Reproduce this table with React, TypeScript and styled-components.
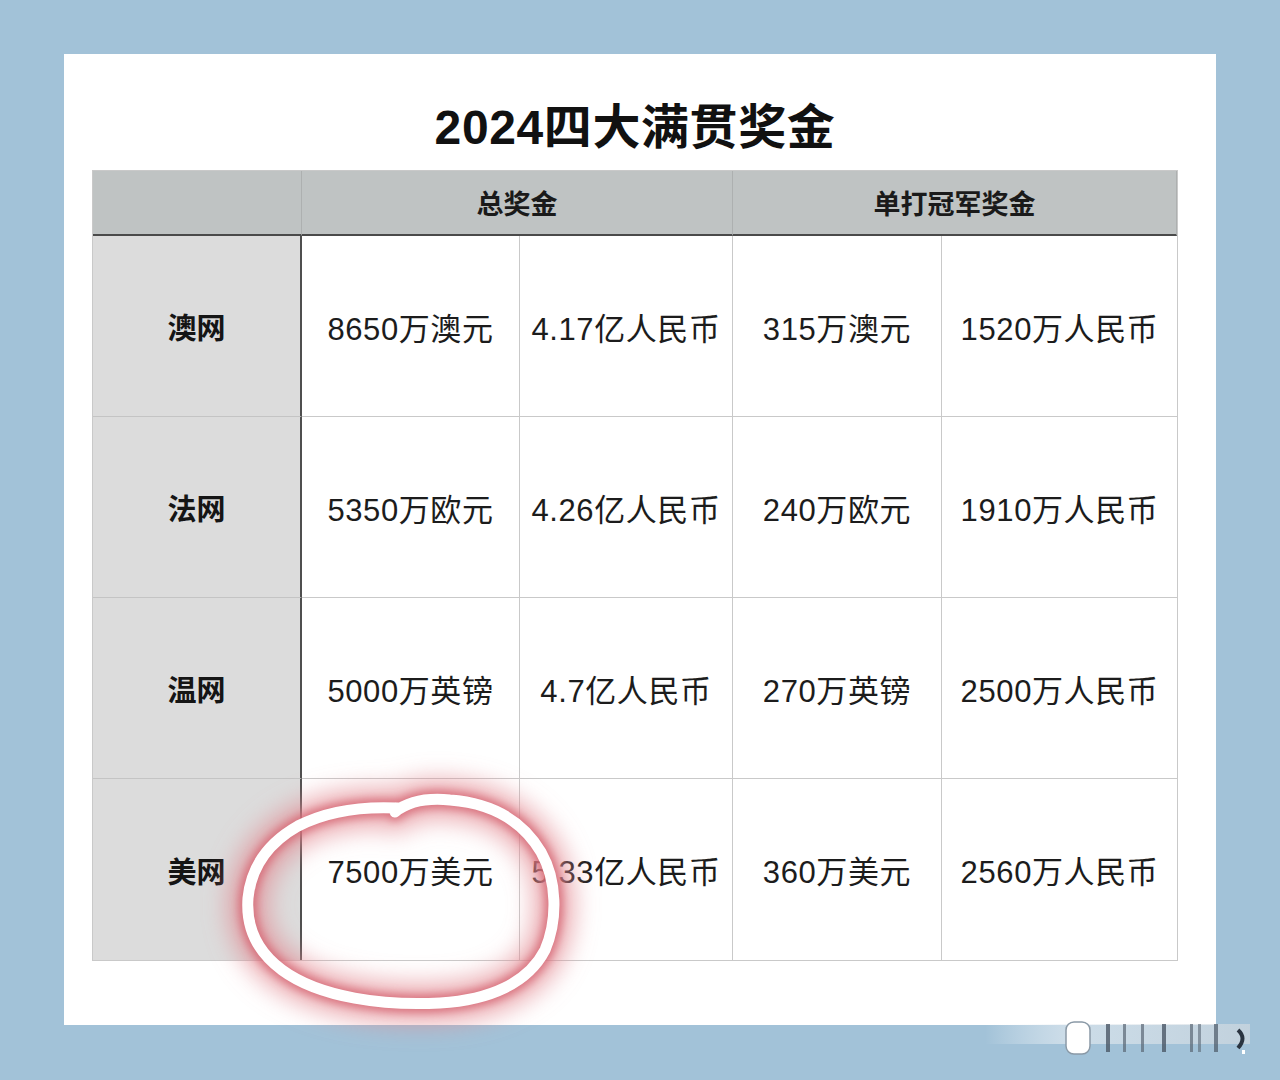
import React from "react";
import styled, { createGlobalStyle } from "styled-components";

const Global = createGlobalStyle`
  html, body { margin: 0; padding: 0; background: #a2c2d8; }
  body { width: 1280px; height: 1080px; overflow: hidden; font-family: "Liberation Sans", "Noto Sans CJK SC", sans-serif; }
`;

const Page = styled.div`
  position: relative;
  width: 1280px;
  height: 1080px;
  padding: 54px 64px 0 64px;
  box-sizing: border-box;
`;

const Card = styled.div`
  width: 1152px;
  height: 971px;
  background: #ffffff;
  box-sizing: border-box;
  padding: 0 38px 0 28px;
  display: flex;
  flex-direction: column;
`;

const Title = styled.h1`
  margin: 0;
  height: 116px;
  display: flex;
  align-items: center;
  justify-content: center;
  padding-top: 22px;
  box-sizing: border-box;
  font-size: 48px;
  font-weight: 700;
  color: #111;
  letter-spacing: 0.6px;
  font-family: "Liberation Sans", "Noto Sans CJK SC", sans-serif;
`;

const Grid = styled.div`
  display: grid;
  grid-template-columns: 209px 218px 213px 209px 235px;
  grid-template-rows: 65px repeat(4, 181px);
  border: 1px solid #c9c9c9;
  box-sizing: border-box;
  width: 1086px;
`;

const HeadCell = styled.div<{ $span?: number }>`
  grid-column: span ${(p) => p.$span ?? 1};
  background: #bfc3c3;
  border-bottom: 2px solid #4a4a4a;
  border-right: 1px solid #adb0b0;
  display: flex;
  align-items: center;
  justify-content: center;
  font-size: 27px;
  font-weight: 700;
  color: #1a1a1a;
  &:last-child { border-right: none; }
`;

const RowLabel = styled.div<{ $last?: boolean }>`
  background: #dcdcdc;
  border-right: 2px solid #4f4f4f;
  border-bottom: ${(p) => (p.$last ? "none" : "1px solid #c4c4c4")};
  display: flex;
  align-items: center;
  justify-content: center;
  font-size: 29px;
  font-weight: 700;
  color: #151515;
`;

const Cell = styled.div<{ $last?: boolean; $lastCol?: boolean }>`
  background: #fff;
  border-right: ${(p) => (p.$lastCol ? "none" : "1px solid #c9c9c9")};
  border-bottom: ${(p) => (p.$last ? "none" : "1px solid #c9c9c9")};
  display: flex;
  align-items: center;
  justify-content: center;
  font-size: 31px;
  letter-spacing: 0.6px;
  color: #1c1c1c;
  white-space: nowrap;
`;

const Annotation = styled.svg`
  position: absolute;
  left: 0;
  top: 0;
  width: 1280px;
  height: 1080px;
  pointer-events: none;
`;

const rows = [
  ["澳网", "8650万澳元", "4.17亿人民币", "315万澳元", "1520万人民币"],
  ["法网", "5350万欧元", "4.26亿人民币", "240万欧元", "1910万人民币"],
  ["温网", "5000万英镑", "4.7亿人民币", "270万英镑", "2500万人民币"],
  ["美网", "7500万美元", "5.33亿人民币", "360万美元", "2560万人民币"],
];

const circlePath =
  "M395 812 C410 800 430 798 450 800 C490 803 522 820 541 852 C557 880 558 920 545 950 C528 983 490 1000 440 1003 C385 1006 320 998 282 970 C255 950 246 925 248 898 C251 868 268 843 298 826 C325 812 358 806 398 808";

export default function App() {
  return (
    <Page>
      <Global />
      <Card>
        <Title>2024四大满贯奖金</Title>
        <Grid>
          <HeadCell />
          <HeadCell $span={2}>总奖金</HeadCell>
          <HeadCell $span={2}>单打冠军奖金</HeadCell>
          {rows.map((r, i) => (
            <React.Fragment key={r[0]}>
              <RowLabel $last={i === rows.length - 1}>{r[0]}</RowLabel>
              {r.slice(1).map((v, j) => (
                <Cell key={j} $last={i === rows.length - 1} $lastCol={j === 3}>
                  {v}
                </Cell>
              ))}
            </React.Fragment>
          ))}
        </Grid>
      </Card>
      <Annotation viewBox="0 0 1280 1080">
        <defs>
          <filter id="glowWide" x="-30%" y="-30%" width="160%" height="160%">
            <feGaussianBlur stdDeviation="12" />
          </filter>
          <filter id="glowNear" x="-20%" y="-20%" width="140%" height="140%">
            <feGaussianBlur stdDeviation="4" />
          </filter>
          <linearGradient id="wmfade" x1="0" x2="1" y1="0" y2="0">
            <stop offset="0" stopColor="#ffffff" stopOpacity="0" />
            <stop offset="0.3" stopColor="#e8eef3" stopOpacity="0.6" />
            <stop offset="1" stopColor="#cfd8df" stopOpacity="0.7" />
          </linearGradient>
        </defs>
        <path d={circlePath} fill="none" stroke="#e28a93" strokeOpacity="0.7" strokeWidth="40" strokeLinecap="round" filter="url(#glowWide)" />
        <path d={circlePath} fill="none" stroke="#d4636f" strokeOpacity="0.8" strokeWidth="18" strokeLinecap="round" filter="url(#glowNear)" />
        <path d={circlePath} fill="none" stroke="#ffffff" strokeWidth="11" strokeLinecap="round" strokeLinejoin="round" />
        <path d="M393 812 l3 -6" stroke="#ffffff" strokeWidth="6" strokeLinecap="round" />
        <g>
          <rect x="985" y="1024" width="265" height="20" fill="url(#wmfade)" />
          <rect x="1066" y="1022" width="24" height="32" rx="8" fill="#ffffff" stroke="#8a99a6" strokeWidth="1.5" />
          <rect x="1106" y="1024" width="4" height="28" fill="#4b5866" opacity="0.8" />
          <rect x="1123" y="1024" width="3" height="28" fill="#5a6775" opacity="0.7" />
          <rect x="1141" y="1024" width="3" height="28" fill="#5a6775" opacity="0.7" />
          <rect x="1162" y="1024" width="4" height="28" fill="#4b5866" opacity="0.8" />
          <rect x="1190" y="1024" width="3" height="28" fill="#5a6775" opacity="0.7" />
          <rect x="1198" y="1024" width="3" height="28" fill="#5a6775" opacity="0.6" />
          <rect x="1214" y="1024" width="4" height="28" fill="#4b5866" opacity="0.7" />
          <path d="M1238 1030 q9 8 0 18" fill="none" stroke="#2a3440" strokeWidth="4" />
          <rect x="1242" y="1050" width="3" height="4" fill="#ffffff" />
        </g>
      </Annotation>
    </Page>
  );
}
